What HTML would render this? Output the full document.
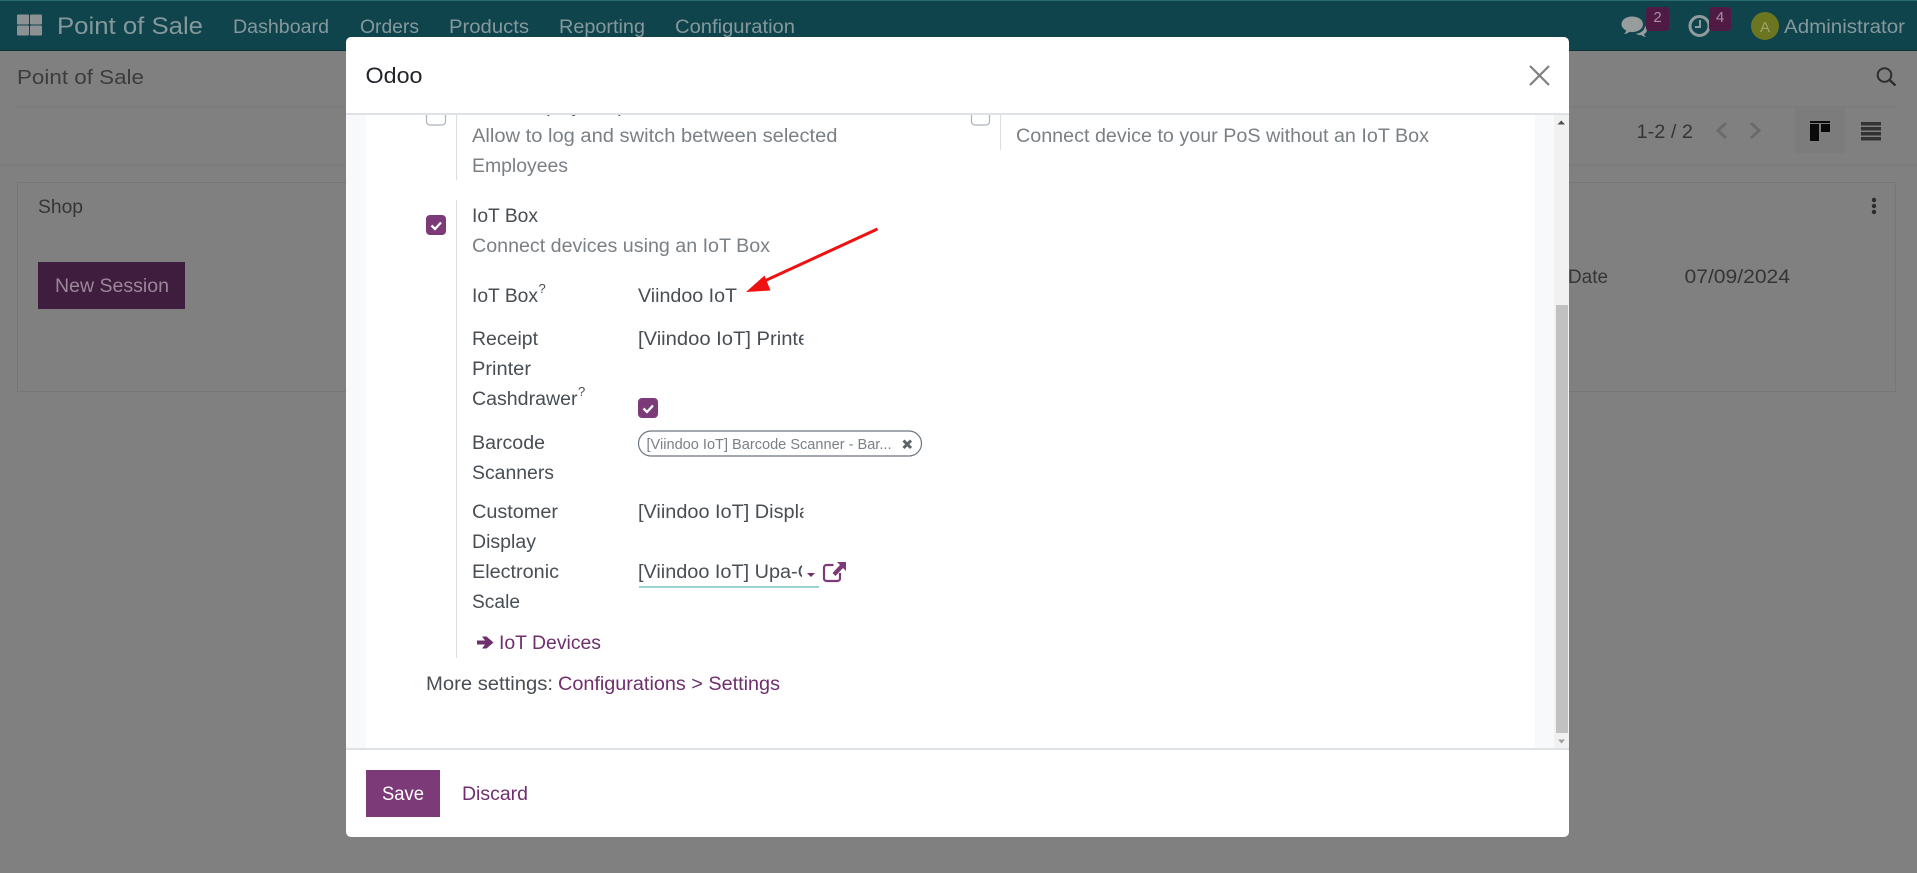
<!DOCTYPE html>
<html lang="en">
<head>
<meta charset="utf-8">
<title>Point of Sale</title>
<style>
html,body{margin:0;padding:0;width:1917px;height:873px;overflow:hidden;background:#808080}
svg{display:block;font-family:"Liberation Sans",sans-serif}
text{font-size:19px;white-space:pre}
.nav{fill:#84989c}
.d{fill:#484e53}
.g{fill:#7b8085}
.p{fill:#6f2f6c}
.bk{fill:#353535}
</style>
</head>
<body>
<svg width="1917" height="873" viewBox="0 0 1917 873" xmlns="http://www.w3.org/2000/svg">
<defs>
<clipPath id="body"><rect x="346" y="115" width="1223" height="633"/></clipPath>
<clipPath id="c1"><rect x="630" y="320" width="173.500" height="40"/></clipPath>
<clipPath id="c2"><rect x="630" y="495" width="173.500" height="40"/></clipPath>
<clipPath id="c3"><rect x="630" y="555" width="172" height="40"/></clipPath>
</defs>

<!-- page background -->
<rect width="1917" height="873" fill="#808080"/>
<rect width="1917" height="51" fill="#10444d"/>
<rect width="1917" height="1" fill="#2a6a70"/>
<rect y="50" width="1917" height="1" fill="#0c3036"/>

<!-- navbar -->
<g fill="#8c9293">
<rect x="17" y="14.500" width="12" height="10" rx="1"/><rect x="30" y="14.500" width="12" height="10" rx="1"/>
<rect x="17" y="25.500" width="12" height="10" rx="1"/><rect x="30" y="25.500" width="12" height="10" rx="1"/>
</g>
<text x="57" y="34" class="nav" style="font-size:24px" textLength="146" lengthAdjust="spacingAndGlyphs">Point of Sale</text>
<text x="233" y="33" class="nav" textLength="96" lengthAdjust="spacingAndGlyphs">Dashboard</text>
<text x="360" y="33" class="nav" textLength="59" lengthAdjust="spacingAndGlyphs">Orders</text>
<text x="449" y="33" class="nav" textLength="80" lengthAdjust="spacingAndGlyphs">Products</text>
<text x="559" y="33" class="nav" textLength="86" lengthAdjust="spacingAndGlyphs">Reporting</text>
<text x="675" y="33" class="nav" textLength="120" lengthAdjust="spacingAndGlyphs">Configuration</text>

<!-- systray -->
<g fill="#979c9c">
<path d="M1632 16.500c6.500 0 11 3.400 11 7.800s-4.500 7.800-11 7.800c-1 0-1.800-.1-2.600-.2-1.500 1.300-3.300 2-5.400 2.200 1.200-1.100 2-2.300 2.200-3.700-3-1.300-4.700-3.500-4.700-6.100 0-4.400 4.500-7.800 10.500-7.800z"/>
<path d="M1645 26c1.300 1.100 2 2.400 2 3.800 0 1.800-1.100 3.300-2.900 4.300.2 1 .8 2 1.700 2.800-1.700-.2-3.200-.8-4.400-1.800-2 .1-4.100-.4-5.600-1.400 4.800-.3 8.700-3.200 9.200-7.700z"/>
</g>
<rect x="1646" y="7" width="23" height="24" rx="3" fill="#4f1b45"/>
<text x="1657.500" y="22" text-anchor="middle" style="font-size:15px" fill="#a98da4">2</text>
<circle cx="1699.500" cy="26" r="9.500" fill="none" stroke="#929b9b" stroke-width="3"/>
<path d="M1700 20v7h-5" fill="none" stroke="#929b9b" stroke-width="2"/>
<rect x="1709" y="7" width="22" height="24" rx="3" fill="#4f1b45"/>
<text x="1720" y="22" text-anchor="middle" style="font-size:15px" fill="#a98da4">4</text>
<circle cx="1765" cy="26" r="14" fill="#6c7520"/>
<text x="1765" y="32" text-anchor="middle" style="font-size:15px" fill="#a0a46a">A</text>
<text x="1784" y="33" class="nav" textLength="121" lengthAdjust="spacingAndGlyphs">Administrator</text>

<!-- control panel -->
<text x="17" y="84" style="font-size:20px" fill="#3c3c3c" textLength="127" lengthAdjust="spacingAndGlyphs">Point of Sale</text>
<rect x="17" y="106.500" width="1879" height="1" fill="#777"/>
<rect y="164.500" width="1917" height="1" fill="#777"/>
<circle cx="1884.500" cy="75" r="6.800" fill="none" stroke="#2e2e2e" stroke-width="2"/>
<path d="M1889.500 80l6 5.500" stroke="#2e2e2e" stroke-width="2.400"/>
<text x="1636.500" y="138" class="bk" textLength="56.500" lengthAdjust="spacingAndGlyphs">1-2 / 2</text>
<path d="M1726 123l-8 7.500 8 7.500" fill="none" stroke="#6b6b6b" stroke-width="3"/>
<path d="M1751 123l8 7.500-8 7.500" fill="none" stroke="#6b6b6b" stroke-width="3"/>
<rect x="1795" y="107.500" width="50" height="46" fill="#7c7c7c"/>
<path d="M1810 121h20v2h-20zM1810 124h9v17h-9zM1821 124h9v8h-9z" fill="#0a0a0a"/>
<path d="M1861 122h20v3.500h-20zM1861 127h20v3.500h-20zM1861 132h20v3.500h-20zM1861 137h20v3.500h-20z" fill="#333"/>

<!-- kanban card -->
<rect x="17.500" y="182.500" width="1878" height="209" fill="#808080" stroke="#767676"/>
<text x="38" y="213" class="bk" textLength="45" lengthAdjust="spacingAndGlyphs">Shop</text>
<rect x="38" y="262" width="147" height="47" fill="#3f1d3e"/>
<text x="55" y="292" style="font-size:19px" fill="#9c879a" textLength="114" lengthAdjust="spacingAndGlyphs">New Session</text>
<text x="1568" y="283" class="bk" textLength="40" lengthAdjust="spacingAndGlyphs">Date</text>
<text x="1684.500" y="283" class="bk" textLength="105.500" lengthAdjust="spacingAndGlyphs">07/09/2024</text>
<circle cx="1874" cy="200" r="2.200" fill="#2a2a2a"/><circle cx="1874" cy="206" r="2.200" fill="#2a2a2a"/><circle cx="1874" cy="212" r="2.200" fill="#2a2a2a"/>

<!-- modal -->
<rect x="346" y="37" width="1223" height="800" rx="5" fill="#fff"/>
<text x="365.500" y="83" style="font-size:22px" fill="#212529" textLength="57" lengthAdjust="spacingAndGlyphs">Odoo</text>
<path d="M1530 66l19 19M1549 66l-19 19" stroke="#808080" stroke-width="2.200"/>
<rect x="346" y="113" width="1223" height="2" fill="#dee2e6"/>

<!-- modal body -->
<rect x="346" y="115" width="1223" height="633" fill="#f8f9fa"/>
<rect x="366" y="115" width="1169" height="633" fill="#fff"/>
<rect x="1554" y="115" width="15" height="633" fill="#f1f1f1"/>
<rect x="1556" y="305" width="12" height="428" fill="#c1c1c1"/>
<path d="M1557.500 124.500h7.500l-3.750-4z" fill="#505050"/>
<path d="M1558 739.500h7l-3.500 4z" fill="#a0a0a0"/>

<g clip-path="url(#body)">
<text x="472" y="112" class="d" textLength="246" lengthAdjust="spacingAndGlyphs">Multi Employees per Session</text>
<rect x="426.500" y="105" width="19" height="20" rx="3.500" fill="#fff" stroke="#adb5bd" stroke-width="1.300"/>
<rect x="971.500" y="105" width="18" height="20" rx="3.500" fill="#fff" stroke="#adb5bd" stroke-width="1.300"/>
</g>
<rect x="456" y="115" width="1" height="65" fill="#dadde0"/>
<rect x="1000" y="115" width="1" height="35" fill="#dadde0"/>
<text x="472" y="142" class="g" textLength="365.500" lengthAdjust="spacingAndGlyphs">Allow to log and switch between selected</text>
<text x="472" y="172" class="g" textLength="96" lengthAdjust="spacingAndGlyphs">Employees</text>
<text x="1016" y="142" class="g" textLength="413" lengthAdjust="spacingAndGlyphs">Connect device to your PoS without an IoT Box</text>

<!-- IoT section -->
<rect x="456" y="200" width="1" height="458" fill="#dadde0"/>
<rect x="426" y="215" width="20" height="20" rx="4" fill="#7c3a78"/>
<path d="M431.500 225.500l3.500 3.500 6-6.500" fill="none" stroke="#fff" stroke-width="2.300"/>
<text x="472" y="222" class="d" textLength="66" lengthAdjust="spacingAndGlyphs">IoT Box</text>
<text x="472" y="252" class="g" textLength="298" lengthAdjust="spacingAndGlyphs">Connect devices using an IoT Box</text>

<text x="472" y="302" class="d" textLength="66" lengthAdjust="spacingAndGlyphs">IoT Box</text>
<text x="538.500" y="293" class="d" style="font-size:13px">?</text>
<text x="638" y="302" class="d" textLength="99" lengthAdjust="spacingAndGlyphs">Viindoo IoT</text>

<text x="472" y="345" class="d" textLength="66" lengthAdjust="spacingAndGlyphs">Receipt</text>
<text x="472" y="375" class="d" textLength="59" lengthAdjust="spacingAndGlyphs">Printer</text>
<g clip-path="url(#c1)"><text x="638" y="345" class="d" textLength="178" lengthAdjust="spacingAndGlyphs">[Viindoo IoT] Printer</text></g>

<text x="472" y="405" class="d" textLength="105.500" lengthAdjust="spacingAndGlyphs">Cashdrawer</text>
<text x="578" y="396" class="d" style="font-size:13px">?</text>
<rect x="638" y="398" width="20" height="20" rx="4" fill="#7c3a78"/>
<path d="M643.500 408.500l3.500 3.500 6-6.500" fill="none" stroke="#fff" stroke-width="2.300"/>

<text x="472" y="449" class="d" textLength="73" lengthAdjust="spacingAndGlyphs">Barcode</text>
<text x="472" y="479" class="d" textLength="82" lengthAdjust="spacingAndGlyphs">Scanners</text>
<rect x="638.500" y="431" width="283" height="25" rx="12.500" fill="#fff" stroke="#6c757d" stroke-width="1.200"/>
<text x="646.500" y="449" class="g" style="font-size:15px" textLength="245" lengthAdjust="spacingAndGlyphs">[Viindoo IoT] Barcode Scanner - Bar...</text>
<path d="M903.500 440.500l7.500 7.500M911 440.500l-7.500 7.500" stroke="#5f6366" stroke-width="3"/>

<text x="472" y="518" class="d" textLength="86" lengthAdjust="spacingAndGlyphs">Customer</text>
<text x="472" y="548" class="d" textLength="64" lengthAdjust="spacingAndGlyphs">Display</text>
<g clip-path="url(#c2)"><text x="638" y="518" class="d" textLength="182" lengthAdjust="spacingAndGlyphs">[Viindoo IoT] Display</text></g>

<text x="472" y="578" class="d" textLength="87" lengthAdjust="spacingAndGlyphs">Electronic</text>
<text x="472" y="608" class="d" textLength="48" lengthAdjust="spacingAndGlyphs">Scale</text>
<g clip-path="url(#c3)"><text x="638" y="578" class="d" textLength="174" lengthAdjust="spacingAndGlyphs">[Viindoo IoT] Upa-C</text></g>
<path d="M807 573h8l-4 4z" fill="#6f2f6c"/>
<rect x="639" y="586.500" width="180" height="1" fill="#3aa6a6"/>
<path d="M840 573v5.500a2.500 2.500 0 0 1-2.500 2.500h-11a2.500 2.500 0 0 1-2.500-2.500v-11a2.500 2.500 0 0 1 2.500-2.500h7" fill="none" stroke="#7c3a78" stroke-width="2.200"/>
<path d="M837 562h9v9l-3-3-7.500 8-3-3 7.500-8z" fill="#7c3a78"/>

<path d="M477 640.500h8l-3-4h4.500l7 6-7 6H482l3-4h-8z" fill="#6f2f6c"/>
<text x="499" y="649" class="p" textLength="102" lengthAdjust="spacingAndGlyphs">IoT Devices</text>

<text x="426" y="690" class="d" textLength="127" lengthAdjust="spacingAndGlyphs">More settings:</text>
<text x="558" y="690" class="p" textLength="222" lengthAdjust="spacingAndGlyphs">Configurations &gt; Settings</text>

<!-- red arrow -->
<path d="M877.500 229L758 284" stroke="#ee1111" stroke-width="3"/>
<path d="M746 292l18.500-16.500 6 15z" fill="#ee1111"/>

<!-- footer -->
<rect x="346" y="748" width="1223" height="2" fill="#dee2e6"/>
<rect x="366" y="770" width="74" height="47" fill="#7c3a78"/>
<text x="382" y="800" style="font-size:19px" fill="#fff" textLength="42" lengthAdjust="spacingAndGlyphs">Save</text>
<text x="462" y="800" class="p" textLength="66" lengthAdjust="spacingAndGlyphs">Discard</text>
</svg>
</body>
</html>
